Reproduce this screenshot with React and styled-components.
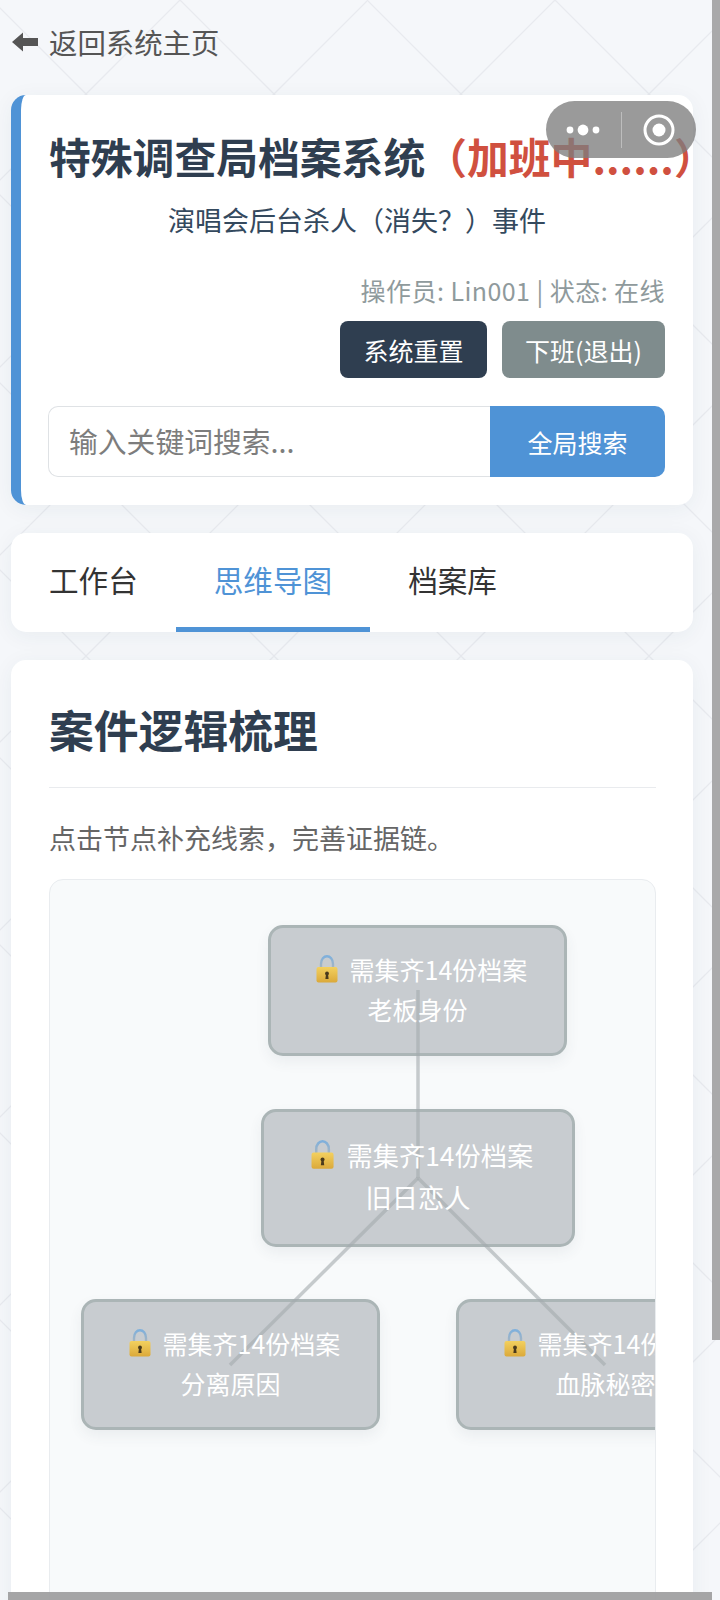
import React from "react";
import styled, { createGlobalStyle } from "styled-components";

const tile = encodeURIComponent(
  `<svg xmlns="http://www.w3.org/2000/svg" width="187.5" height="187.5"><path d="M0 0L187.5 187.5M187.5 0L0 187.5" stroke="#e8eaef" stroke-width="1.3" fill="none"/></svg>`
);

const Global = createGlobalStyle`
  html, body { margin: 0; padding: 0; height: 1600px; overflow: hidden; }
  body {
    background-color: #f5f7fa;
    background-image: url("data:image/svg+xml,${tile}");
    background-position: -7.5px 0;
    font-family: "Noto Sans CJK SC", "Noto Sans", sans-serif;
  }
  * { box-sizing: border-box; }
`;

const Page = styled.div`
  width: 720px;
  height: 1600px;
  padding-left: 11px;
  position: relative;
  overflow: hidden;
`;
const BackLink = styled.a`
  display: flex;
  align-items: center;
  gap: 11px;
  height: 95px;
  padding-bottom: 12px;
  margin-left: 1px;
  font-size: 28.4px;
  color: #555;
`;
const ArrowIcon = styled.svg`
  width: 26px;
  height: 20px;
  margin-top: 1px;
`;
const Card = styled.section`
  width: 682px;
  background: #fff;
  border-radius: 15px;
  box-shadow: 0 4px 22px rgba(40, 60, 90, 0.06);
`;
const Header = styled(Card)`
  height: 410px;
  border-left: 10px solid #4f93d6;
  padding: 35px 28px 28px 28px;
`;
const Title = styled.h1`
  margin: 0;
  font-size: 41.8px;
  line-height: 52px;
  font-weight: 700;
  color: #2f3e50;
  white-space: nowrap;
`;
const Overtime = styled.span`
  color: #d0503f;
`;
const Subtitle = styled.div`
  margin-top: 18px;
  font-size: 27px;
  line-height: 40px;
  text-align: center;
  color: #34495e;
`;
const Info = styled.div`
  margin-top: 32px;
  font-size: 25px;
  letter-spacing: 0.45px;
  line-height: 36px;
  text-align: right;
  color: #8f9a9c;
  white-space: nowrap;
`;
const Actions = styled.div`
  margin-top: 13px;
  display: flex;
  justify-content: flex-end;
  gap: 15px;
`;
const ActionButton = styled.button`
  height: 57px;
  width: ${(p) => p.$width}px;
  border: 0;
  padding: 0;
  border-radius: 8px;
  background: ${(p) => p.$bg};
  color: #fff;
  font: inherit;
  font-size: 25px;
`;
const Search = styled.div`
  margin-top: 28px;
  height: 71px;
  display: flex;
`;
const SearchInput = styled.div`
  flex: 1;
  display: flex;
  align-items: center;
  padding: 0 20px 2px;
  border: 1.5px solid #dfe2e5;
  border-right: 0;
  border-radius: 10px 0 0 10px;
  font-size: 28.8px;
  color: #7d7d7d;
  white-space: nowrap;
  margin-left: -1px;
`;
const SearchButton = styled.button`
  width: 175px;
  border: 0;
  padding: 0;
  border-radius: 0 10px 10px 0;
  background: #4f93d6;
  color: #fff;
  font: inherit;
  font-size: 25px;
`;
const Tabs = styled(Card)`
  margin-top: 28px;
  height: 99px;
  display: flex;
  overflow: hidden;
`;
const Tab = styled.div`
  padding: 0 38px 1px;
  display: flex;
  align-items: center;
  font-size: 29.6px;
  color: ${(p) => (p.$active ? "#4f93d6" : "#333")};
  border-bottom: 5px solid ${(p) => (p.$active ? "#4f93d6" : "transparent")};
`;
const Panel = styled(Card)`
  margin-top: 28px;
  height: 1100px;
  padding: 0 37px 0 38px;
`;
const PanelTitle = styled.h2`
  margin: 0;
  height: 128px;
  padding-top: 36px;
  border-bottom: 1px solid #e9ebee;
  font-size: 44.8px;
  line-height: 66px;
  font-weight: 700;
  color: #2f3e50;
`;
const Hint = styled.p`
  margin: 30px 0 0;
  font-size: 27px;
  line-height: 40px;
  color: #666;
`;
const MapArea = styled.div`
  position: relative;
  margin-top: 21px;
  height: 900px;
  overflow: hidden;
  background: #f8fafb;
  border: 1px solid #e9ecef;
  border-radius: 14px;
`;
const Node = styled.div`
  position: absolute;
  left: ${(p) => p.$x}px;
  top: ${(p) => p.$y}px;
  width: ${(p) => (p.$big ? 314 : 299)}px;
  height: ${(p) => (p.$big ? 138 : 131)}px;
  padding-top: ${(p) => (p.$big ? 22 : 21)}px;
  background: #c8ccd0;
  border: 3.5px solid #abb5b6;
  border-radius: 15px;
  box-shadow: 0 6px 14px rgba(60, 70, 80, 0.07);
  font-size: ${(p) => (p.$big ? 26.25 : 25)}px;
  line-height: ${(p) => (p.$big ? 42 : 40)}px;
`;
const NodeText = styled.div`
  position: relative;
  z-index: 2;
  color: #fff;
  text-align: center;
  white-space: nowrap;
`;
const NodeLine = styled.div`
  display: flex;
  justify-content: center;
  align-items: center;
  gap: 0.48em;
  padding-left: 8px;
`;
const LockIcon = styled.svg`
  width: 0.88em;
  height: 1.12em;
  flex: none;
`;
const Links = styled.svg`
  position: absolute;
  z-index: 1;
  inset: 0;
  width: 100%;
  height: 100%;
  pointer-events: none;
`;
const Capsule = styled.div`
  position: absolute;
  left: 546px;
  top: 101px;
  width: 150px;
  height: 57px;
  display: flex;
  align-items: center;
  border-radius: 29px;
  background: rgba(125, 125, 125, 0.78);
`;
const CapsuleSide = styled.div`
  flex: 1;
  display: flex;
  justify-content: center;
  align-items: center;
`;
const CapsuleDivider = styled.div`
  width: 1px;
  height: 36px;
  background: rgba(255, 255, 255, 0.35);
`;
const ScrollRight = styled.div`
  position: absolute;
  right: 0;
  top: 0;
  width: 8px;
  height: 1340px;
  background: #a9a9aa;
`;
const ScrollBottom = styled.div`
  position: absolute;
  left: 8px;
  bottom: 0;
  width: 704px;
  height: 8px;
  background: rgba(160, 160, 161, 0.95);
`;

const BackArrow = () => (
  <ArrowIcon viewBox="0 0 26 20">
    <path d="M0 10 L11 0.5 V6 H26 V14 H11 V19.5 Z" fill="#555" />
  </ArrowIcon>
);

const Lock = () => (
  <LockIcon viewBox="0 0 22 28">
    <defs>
      <linearGradient id="shackle" x1="0" y1="0" x2="0" y2="1">
        <stop offset="0" stopColor="#7fb0dc" />
        <stop offset="1" stopColor="#aeb6bb" />
      </linearGradient>
      <linearGradient id="body" x1="0" y1="0" x2="0" y2="1">
        <stop offset="0" stopColor="#f3d05f" />
        <stop offset="1" stopColor="#dba93a" />
      </linearGradient>
    </defs>
    <path d="M5 15 V9 C5 4 8 1.3 11 1.3 C14 1.3 17 4 17 9 V15" fill="none" stroke="url(#shackle)" strokeWidth="2.4" />
    <rect x="0.5" y="12" width="21" height="15.5" rx="2" fill="url(#body)" />
    <circle cx="11" cy="18.5" r="1.9" fill="#4a3a1c" />
    <path d="M10 19 H12 L12.6 24 H9.4 Z" fill="#4a3a1c" />
  </LockIcon>
);

const Dots = () => (
  <svg width="36" height="14" viewBox="0 0 36 14">
    <circle cx="5" cy="7" r="3.4" fill="#fff" />
    <circle cx="18" cy="7" r="5.4" fill="#fff" />
    <circle cx="31" cy="7" r="3.4" fill="#fff" />
  </svg>
);

const Target = () => (
  <svg width="32" height="32" viewBox="0 0 32 32">
    <circle cx="16" cy="16" r="14" fill="none" stroke="#fff" strokeWidth="3" />
    <circle cx="16" cy="16" r="6.5" fill="#fff" />
  </svg>
);

const nodes = [
  { x: 218, y: 45, label: "老板身份" },
  { x: 211, y: 229, label: "旧日恋人", big: true },
  { x: 31, y: 419, label: "分离原因" },
  { x: 406, y: 419, label: "血脉秘密" },
];

export default function App() {
  return (
    <Page>
      <Global />
      <BackLink>
        <BackArrow />
        返回系统主页
      </BackLink>
      <Header>
        <Title>
          特殊调查局档案系统<Overtime>（加班中......）</Overtime>
        </Title>
        <Subtitle>演唱会后台杀人（消失？）事件</Subtitle>
        <Info>操作员: Lin001 | 状态: 在线</Info>
        <Actions>
          <ActionButton $width={147} $bg="#2f3e50">系统重置</ActionButton>
          <ActionButton $width={163} $bg="#7f8c8d">下班(退出)</ActionButton>
        </Actions>
        <Search>
          <SearchInput>输入关键词搜索...</SearchInput>
          <SearchButton>全局搜索</SearchButton>
        </Search>
      </Header>
      <Tabs>
        <Tab>工作台</Tab>
        <Tab $active>思维导图</Tab>
        <Tab>档案库</Tab>
      </Tabs>
      <Panel>
        <PanelTitle>案件逻辑梳理</PanelTitle>
        <Hint>点击节点补充线索，完善证据链。</Hint>
        <MapArea>
          {nodes.map((n) => (
            <Node key={n.label} $x={n.x} $y={n.y} $big={n.big}>
              <NodeText>
                <NodeLine>
                  <Lock />
                  需集齐14份档案
                </NodeLine>
                <div>{n.label}</div>
              </NodeText>
            </Node>
          ))}
          <Links>
            <g stroke="#a3aaae" strokeOpacity="0.6" strokeWidth="3.5" fill="none">
              <path d="M368 110 V298" />
              <path d="M368 298 L180 485" />
              <path d="M368 298 L555 485" />
            </g>
          </Links>
        </MapArea>
      </Panel>
      <Capsule>
        <CapsuleSide>
          <Dots />
        </CapsuleSide>
        <CapsuleDivider />
        <CapsuleSide>
          <Target />
        </CapsuleSide>
      </Capsule>
      <ScrollRight />
      <ScrollBottom />
    </Page>
  );
}
